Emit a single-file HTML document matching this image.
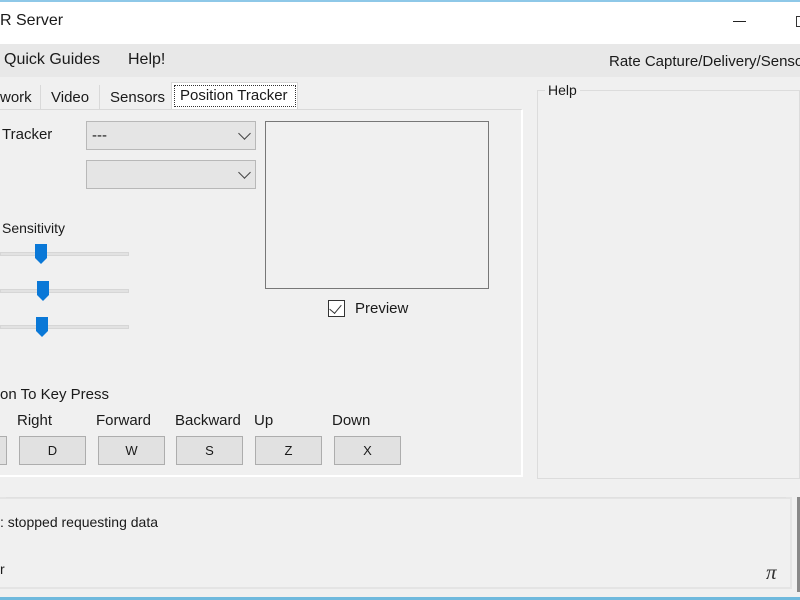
<!DOCTYPE html>
<html><head><style>
*{margin:0;padding:0;box-sizing:border-box}
body{width:800px;height:600px;overflow:hidden;background:#f0f0f0;font-family:"Liberation Sans",sans-serif;font-size:15px;color:#1a1a1a;position:relative}
.a{position:absolute;white-space:nowrap}
.combo{position:absolute;background:#e5e5e5;border:1px solid #b8b8b8}
.chev{position:absolute;right:6px;top:7px;width:9px;height:9px;border-right:1.5px solid #444;border-bottom:1.5px solid #444;transform:rotate(45deg)}
.track{position:absolute;left:0;width:129px;height:4px;background:#e2e2e2;border:1px solid #d6d6d6}
.thumb{position:absolute;width:12px;height:20px;background:#0a78d7;clip-path:polygon(0 0,100% 0,100% 70%,50% 100%,0 70%)}
.btn{position:absolute;top:436px;width:67px;height:29px;background:#e1e1e1;border:1px solid #adadad;text-align:center;line-height:27px;font-size:13px}
</style></head><body>
<div class="a" style="left:0;top:0;width:800px;height:44px;background:#fff;border-top:2px solid #8ec8e8"></div>
<div class="a" style="left:0;top:12px;font-size:16px">R Server</div>
<div class="a" style="left:733px;top:21px;width:13px;height:1px;background:#222"></div>
<div class="a" style="left:796px;top:16px;width:6px;height:11px;border:1px solid #333"></div>
<div class="a" style="left:0;top:44px;width:800px;height:33px;background:#e8e8e8"></div>
<div class="a" style="left:4px;top:51px;font-size:16px">Quick Guides</div>
<div class="a" style="left:128px;top:51px;font-size:16px">Help!</div>
<div class="a" style="left:609px;top:53px;font-size:15px">Rate Capture/Delivery/Sensor</div>
<!-- tabs -->
<div class="a" style="left:0;top:85px;width:41px;height:24px;border-right:1px solid #d9d9d9;background:#f0f0f0"></div>
<div class="a" style="left:0;top:89px">work</div>
<div class="a" style="left:41px;top:85px;width:59px;height:24px;border-right:1px solid #d9d9d9"></div>
<div class="a" style="left:51px;top:89px">Video</div>
<div class="a" style="left:110px;top:89px">Sensors</div>
<div class="a" style="left:171px;top:82px;width:127px;height:28px;background:#fff;border:1px solid #d9d9d9;border-bottom:none"></div>
<div class="a" style="left:174px;top:85px;width:122px;height:22px;border:1px dotted #333"></div>
<div class="a" style="left:180px;top:87px">Position Tracker</div>
<div class="a" style="left:0;top:109px;width:523px;height:368px;background:#f0f0f0;border:1px solid #d9d9d9;border-left:none;border-right:2px solid #fff;border-bottom:2px solid #fff"></div>
<div class="a" style="left:2px;top:126px">Tracker</div>
<div class="combo" style="left:86px;top:121px;width:170px;height:29px"><span class="a" style="left:5px;top:5px">---</span><div class="chev"></div></div>
<div class="combo" style="left:86px;top:160px;width:170px;height:29px"><div class="chev"></div></div>
<div class="a" style="left:265px;top:121px;width:224px;height:168px;border:1px solid #777;background:#f0f0f0"></div>
<div class="a" style="left:328px;top:300px;width:17px;height:17px;border:1px solid #333;background:#fff"></div>
<div class="a" style="left:332px;top:302px;width:7px;height:11px;border-right:1.5px solid #333;border-bottom:1.5px solid #333;transform:rotate(40deg)"></div>
<div class="a" style="left:355px;top:300px">Preview</div>
<div class="a" style="left:2px;top:220px;font-size:14px">Sensitivity</div>
<div class="track" style="top:252px"></div><div class="thumb" style="left:35px;top:244px"></div>
<div class="track" style="top:289px"></div><div class="thumb" style="left:37px;top:281px"></div>
<div class="track" style="top:325px"></div><div class="thumb" style="left:36px;top:317px"></div>
<div class="a" style="left:0;top:386px">on To Key Press</div>
<div class="a" style="left:17px;top:412px">Right</div>
<div class="a" style="left:96px;top:412px">Forward</div>
<div class="a" style="left:175px;top:412px">Backward</div>
<div class="a" style="left:254px;top:412px">Up</div>
<div class="a" style="left:332px;top:412px">Down</div>
<div class="btn" style="left:-60px"></div>
<div class="btn" style="left:19px">D</div>
<div class="btn" style="left:98px">W</div>
<div class="btn" style="left:176px">S</div>
<div class="btn" style="left:255px">Z</div>
<div class="btn" style="left:334px">X</div>
<!-- help -->
<div class="a" style="left:537px;top:90px;width:263px;height:389px;border:1px solid #dcdcdc"></div>
<div class="a" style="left:545px;top:82px;padding:0 3px;background:#f0f0f0;font-size:14px">Help</div>
<!-- status -->
<div class="a" style="left:0;top:497px;width:792px;height:92px;border:2px solid #e4e4e4;border-left:none"></div>
<div class="a" style="left:6px;top:497px;width:780px;height:1px;background:#e0e0e0"></div>
<div class="a" style="left:0;top:514px;font-size:14px">: stopped requesting data</div>
<div class="a" style="left:0;top:561px;font-size:14px">r</div>
<div class="a" style="left:766px;top:560px;font-size:21px;font-family:'Liberation Serif',serif;font-style:italic;color:#333">π</div>
<div class="a" style="left:797px;top:497px;width:3px;height:95px;background:#888"></div>
<div class="a" style="left:0;top:597px;width:800px;height:3px;background:#6fb9dd"></div>
</body></html>
